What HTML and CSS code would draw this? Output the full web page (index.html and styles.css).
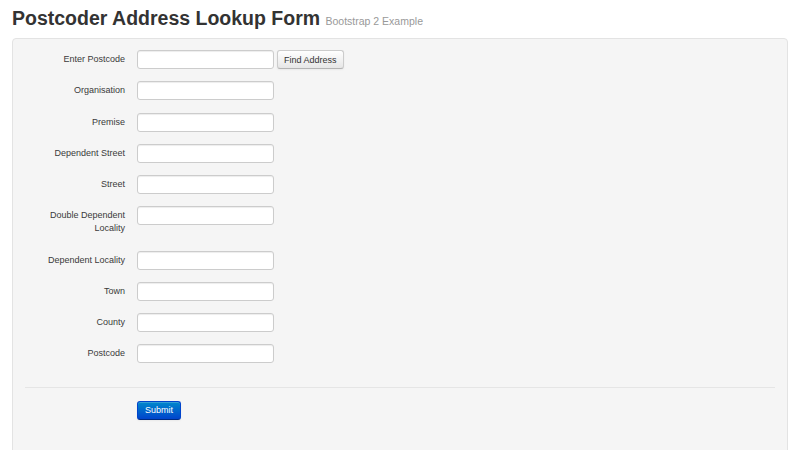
FILE: index.html
```html
<!DOCTYPE html>
<html lang="en">
<head>
    <meta charset="UTF-8">
    <meta name="viewport" content="width=device-width, initial-scale=1.0">
    <title>Postcoder Address Lookup Form</title>
    <link rel="stylesheet" href="styles.css">
</head>
<body>

    <h1 class="page-title">Postcoder Address Lookup Form <small>Bootstrap 2 Example</small></h1>

    <!-- Formulario de moradas -->
    <form class="well form-horizontal">
        <div class="control-group">
            <label class="control-label" for="postcode-lookup">Enter Postcode</label>
            <div class="controls">
                <input type="text" id="postcode-lookup">
                <button type="button" class="btn">Find Address</button>
            </div>
        </div>
        <div class="control-group">
            <label class="control-label" for="organisation">Organisation</label>
            <div class="controls"><input type="text" id="organisation"></div>
        </div>
        <div class="control-group">
            <label class="control-label" for="premise">Premise</label>
            <div class="controls"><input type="text" id="premise"></div>
        </div>
        <div class="control-group">
            <label class="control-label" for="dependent-street">Dependent Street</label>
            <div class="controls"><input type="text" id="dependent-street"></div>
        </div>
        <div class="control-group">
            <label class="control-label" for="street">Street</label>
            <div class="controls"><input type="text" id="street"></div>
        </div>
        <div class="control-group">
            <label class="control-label" for="double-dependent-locality">Double Dependent Locality</label>
            <div class="controls"><input type="text" id="double-dependent-locality"></div>
        </div>
        <div class="control-group">
            <label class="control-label" for="dependent-locality">Dependent Locality</label>
            <div class="controls"><input type="text" id="dependent-locality"></div>
        </div>
        <div class="control-group">
            <label class="control-label" for="town">Town</label>
            <div class="controls"><input type="text" id="town"></div>
        </div>
        <div class="control-group">
            <label class="control-label" for="county">County</label>
            <div class="controls"><input type="text" id="county"></div>
        </div>
        <div class="control-group">
            <label class="control-label" for="postcode">Postcode</label>
            <div class="controls"><input type="text" id="postcode"></div>
        </div>

        <div class="form-actions">
            <button type="submit" class="btn btn-primary">Submit</button>
        </div>
    </form>

</body>
</html>
```

FILE: styles.css
```css
body {
    margin: 0;
    padding: 0 12px;
    font-family: "Liberation Sans", Arial, sans-serif;
    color: #333;
    background: #fff;
}
.page-title {
    margin: 0 0 5px;
    padding-top: 6px;
    font-size: 19.5px;
    line-height: 24px;
    font-weight: bold;
    color: #333;
}
.page-title small {
    font-size: 10.5px;
    font-weight: normal;
    color: #999;
}
.well {
    margin: 0;
    padding: 11px 12px 34px;
    background-color: #f5f5f5;
    border: 1px solid #e3e3e3;
    border-radius: 4px;
}
.control-group {
    display: flex;
    align-items: flex-start;
    margin-bottom: 12.25px;
}
.control-label {
    width: 100px;
    flex-shrink: 0;
    padding: 3px 0;
    text-align: right;
    font-size: 9px;
    line-height: 13px;
    color: #3a3a3a;
}
.controls {
    display: flex;
    margin-left: 12px;
}
.controls input {
    box-sizing: border-box;
    width: 137px;
    height: 19px;
    margin: 0;
    padding: 2px 4px;
    font-family: inherit;
    font-size: 9px;
    background: #fff;
    border: 1px solid #ccc;
    border-radius: 3px;
    box-shadow: inset 0 1px 1px rgba(0, 0, 0, 0.075);
}
.btn {
    box-sizing: border-box;
    height: 19px;
    margin-left: 3px;
    padding: 0 6px;
    font-family: inherit;
    font-size: 9px;
    color: #333;
    background-image: linear-gradient(to bottom, #ffffff, #e6e6e6);
    border: 1px solid #ccc;
    border-bottom-color: #b3b3b3;
    border-radius: 3px;
    box-shadow: inset 0 1px 0 rgba(255, 255, 255, 0.2), 0 1px 2px rgba(0, 0, 0, 0.05);
}
.form-actions {
    margin-top: 24px;
    padding: 11px 0 0 112px;
    border-top: 1px solid #e5e5e5;
}
.btn-primary {
    width: 44px;
    margin-left: 0;
    padding: 0;
    color: #fff;
    background-image: linear-gradient(to bottom, #0088cc, #0044cc);
    border-color: #0044cc #0044cc #002a80;
}
```
